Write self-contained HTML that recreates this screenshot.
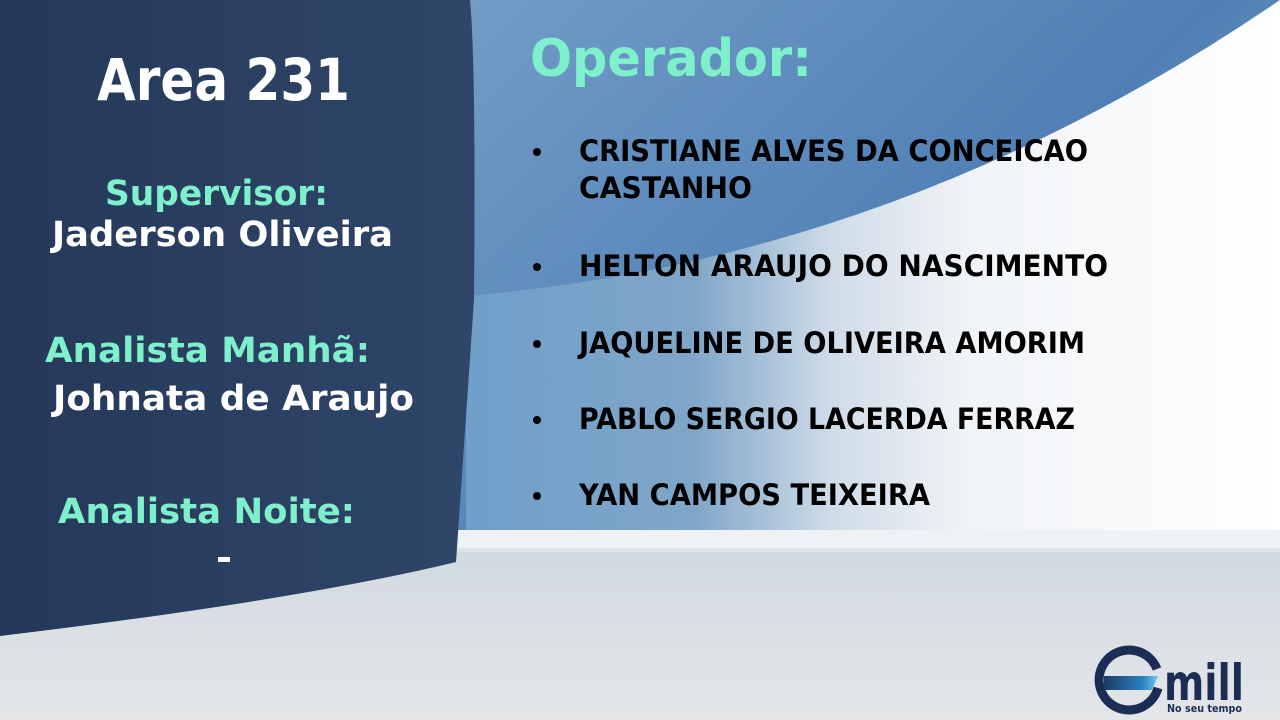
<!DOCTYPE html>
<html><head><meta charset="utf-8"><style>
html,body{margin:0;padding:0;width:1280px;height:720px;overflow:hidden;}
svg{display:block;}
text{font-family:"DejaVu Sans","Liberation Sans",sans-serif;font-weight:bold;}
</style></head><body>
<svg width="1280" height="720" viewBox="0 0 1280 720" xmlns="http://www.w3.org/2000/svg">
<defs>
<linearGradient id="sky" x1="0" y1="0" x2="1" y2="0.6">
<stop offset="0" stop-color="#9dbbd8"/><stop offset="0.3" stop-color="#6f9ac6"/><stop offset="0.7" stop-color="#4f7fb4"/><stop offset="1" stop-color="#8fb0d0"/>
</linearGradient>
<linearGradient id="low" x1="0" y1="0" x2="1" y2="0">
<stop offset="0" stop-color="#6f9fca"/><stop offset="0.28" stop-color="#7fa6c8"/><stop offset="0.45" stop-color="#cfdce8"/><stop offset="0.62" stop-color="#f1f4f7"/><stop offset="1" stop-color="#ffffff"/>
</linearGradient>
<linearGradient id="floor" x1="0" y1="0" x2="0" y2="1">
<stop offset="0" stop-color="#cfd8e0"/><stop offset="1" stop-color="#e4e6e8"/>
</linearGradient>
<linearGradient id="panel" x1="0" y1="0" x2="1" y2="0">
<stop offset="0" stop-color="#25385a"/><stop offset="1" stop-color="#2f4668"/>
</linearGradient>
<linearGradient id="bar" x1="0" y1="0" x2="1" y2="0">
<stop offset="0" stop-color="#1e3a66"/><stop offset="0.7" stop-color="#2a7fc0"/><stop offset="1" stop-color="#6ec8f0"/>
</linearGradient>
</defs>
<rect width="1280" height="720" fill="url(#sky)"/>
<path d="M466 296 Q900 260 1280 0 L1280 532 L466 532 Z" fill="url(#low)"/>
<rect x="0" y="530" width="1280" height="190" fill="url(#floor)"/>
<rect x="440" y="530" width="840" height="18" fill="#eef2f5"/>
<rect x="440" y="548" width="840" height="4" fill="#dde3e8"/>
<path d="M0 0 L470 0 Q476 60 474 300 L456 562 Q300 600 0 636 Z" fill="url(#panel)"/>
<text x="97" y="100" font-size="58" fill="#ffffff" textLength="253" lengthAdjust="spacingAndGlyphs">Area 231</text>
<text x="105" y="205" font-size="35" fill="#7ef0cc" textLength="223" lengthAdjust="spacingAndGlyphs">Supervisor:</text>
<text x="52" y="246" font-size="35" fill="#ffffff" textLength="341" lengthAdjust="spacingAndGlyphs">Jaderson Oliveira</text>
<text x="45" y="362" font-size="35" fill="#7ef0cc" textLength="325" lengthAdjust="spacingAndGlyphs">Analista Manhã:</text>
<text x="53" y="410" font-size="35" fill="#ffffff" textLength="361" lengthAdjust="spacingAndGlyphs">Johnata de Araujo</text>
<text x="58" y="523" font-size="35" fill="#7ef0cc" textLength="297" lengthAdjust="spacingAndGlyphs">Analista Noite:</text>
<rect x="218" y="557" width="12" height="5" fill="#ffffff"/>
<text x="530" y="76" font-size="52" fill="#7ef0cc" textLength="282" lengthAdjust="spacingAndGlyphs">Operador:</text>
<g fill="#000">
<circle cx="537" cy="152" r="4"/><circle cx="537" cy="267" r="4"/><circle cx="537" cy="344" r="4"/><circle cx="537" cy="420" r="4"/><circle cx="537" cy="496" r="4"/>
<text x="579" y="161" font-size="29" textLength="509" lengthAdjust="spacingAndGlyphs">CRISTIANE ALVES DA CONCEICAO</text>
<text x="579" y="198" font-size="29" textLength="173" lengthAdjust="spacingAndGlyphs">CASTANHO</text>
<text x="579" y="276" font-size="29" textLength="529" lengthAdjust="spacingAndGlyphs">HELTON ARAUJO DO NASCIMENTO</text>
<text x="579" y="353" font-size="29" textLength="506" lengthAdjust="spacingAndGlyphs">JAQUELINE DE OLIVEIRA AMORIM</text>
<text x="579" y="429" font-size="29" textLength="496" lengthAdjust="spacingAndGlyphs">PABLO SERGIO LACERDA FERRAZ</text>
<text x="579" y="505" font-size="29" textLength="351" lengthAdjust="spacingAndGlyphs">YAN CAMPOS TEIXEIRA</text>
</g>
<g>
<path d="M1157 669 A30 30 0 1 0 1158 688" fill="none" stroke="#1b2d55" stroke-width="9"/>
<path d="M1104 676 L1158 676 L1152 690 L1104 690 Z" fill="url(#bar)"/>
<text x="1164" y="700" font-size="50" fill="#1b2d55" font-family="Liberation Sans" textLength="80" lengthAdjust="spacingAndGlyphs">mill</text>
<text x="1167" y="712" font-size="11" fill="#1b2d55" font-family="Liberation Sans" font-weight="normal" textLength="75" lengthAdjust="spacingAndGlyphs">No seu tempo</text>
</g>
</svg>
</body></html>
